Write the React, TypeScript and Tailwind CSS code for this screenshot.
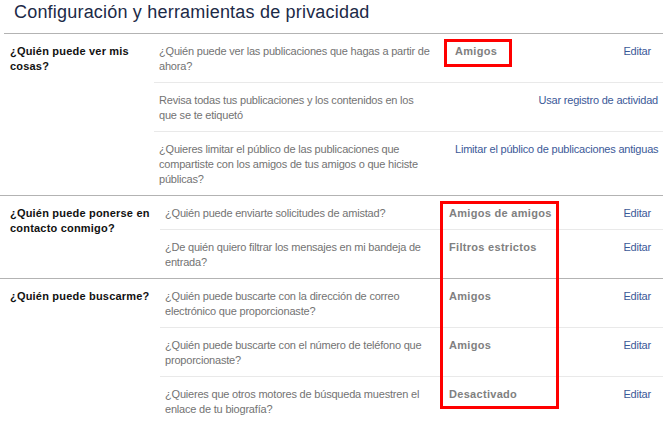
import React from "react";

type Row = {
  question: string;
  value?: string;
  link: string;
};

type Section = {
  label: string;
  wide: boolean;
  rows: Row[];
};

const sections: Section[] = [
  {
    label: "¿Quién puede ver mis cosas?",
    wide: false,
    rows: [
      {
        question: "¿Quién puede ver las publicaciones que hagas a partir de ahora?",
        value: "Amigos",
        link: "Editar",
      },
      {
        question: "Revisa todas tus publicaciones y los contenidos en los que se te etiquetó",
        link: "Usar registro de actividad",
      },
      {
        question:
          "¿Quieres limitar el público de las publicaciones que compartiste con los amigos de tus amigos o que hiciste públicas?",
        link: "Limitar el público de publicaciones antiguas",
      },
    ],
  },
  {
    label: "¿Quién puede ponerse en contacto conmigo?",
    wide: true,
    rows: [
      {
        question: "¿Quién puede enviarte solicitudes de amistad?",
        value: "Amigos de amigos",
        link: "Editar",
      },
      {
        question: "¿De quién quiero filtrar los mensajes en mi bandeja de entrada?",
        value: "Filtros estrictos",
        link: "Editar",
      },
    ],
  },
  {
    label: "¿Quién puede buscarme?",
    wide: true,
    rows: [
      {
        question: "¿Quién puede buscarte con la dirección de correo electrónico que proporcionaste?",
        value: "Amigos",
        link: "Editar",
      },
      {
        question: "¿Quién puede buscarte con el número de teléfono que proporcionaste?",
        value: "Amigos",
        link: "Editar",
      },
      {
        question: "¿Quieres que otros motores de búsqueda muestren el enlace de tu biografía?",
        value: "Desactivado",
        link: "Editar",
      },
    ],
  },
];

const SettingRow: React.FC<{ row: Row; wide: boolean; first: boolean }> = ({ row, wide, first }) => {
  return (
    <div className={`flex pl-[5px] pr-[5px] pt-[10px] pb-[8px] ${first ? "" : "border-t border-[#e9e9e9]"}`}>
      <div className={`shrink-0 text-[#737373] ${wide ? "w-[284px] pr-[9px]" : "w-[296px] pr-[23px]"}`}>
        {row.question}
      </div>
      {row.value ? (
        <>
          <div className="flex-1 min-w-0 font-bold tracking-[0.3px] text-[#808080]">{row.value}</div>
          <a className="pr-[7px] text-[#3b5998] cursor-pointer">{row.link}</a>
        </>
      ) : (
        <div className="flex-1 min-w-0 text-right whitespace-nowrap">
          <a className="text-[#3b5998] cursor-pointer">{row.link}</a>
        </div>
      )}
    </div>
  );
};

export default function App() {
  return (
    <div className="relative w-[663px] h-[429px] bg-white overflow-hidden font-['Liberation_Sans',Arial,sans-serif] text-[11px] leading-[15px] tracking-[-0.2px]">
      <div className="pl-[4px]">
        <h1 className="pl-[10px] h-[33px] text-[18px] leading-[24px] tracking-[0.2px] text-[#1c2a47] font-normal">
          Configuración y herramientas de privacidad
        </h1>
        <div className="border-t border-[#b3b3b3]" />
      </div>

      {sections.map((section, i) => (
        <div key={i} className={`flex ${i > 0 ? "border-t border-[#b3b3b3]" : ""}`}>
          <div
            className={`shrink-0 pl-[10px] pt-[10px] pr-[4px] font-bold tracking-[0.2px] text-[#111] ${
              section.wide ? "w-[160px]" : "w-[154px]"
            }`}
          >
            {section.label}
          </div>
          <div className="flex-1 min-w-0">
            {section.rows.map((row, j) => (
              <SettingRow key={j} row={row} wide={section.wide} first={j === 0} />
            ))}
          </div>
        </div>
      ))}

      {/* red annotation boxes */}
      <div className="absolute left-[444px] top-[39px] w-[68px] h-[28px] border-[3px] border-[#ff0000]" />
      <div className="absolute left-[440px] top-[201px] w-[119px] h-[208px] border-[3px] border-[#ff0000]" />
    </div>
  );
}
